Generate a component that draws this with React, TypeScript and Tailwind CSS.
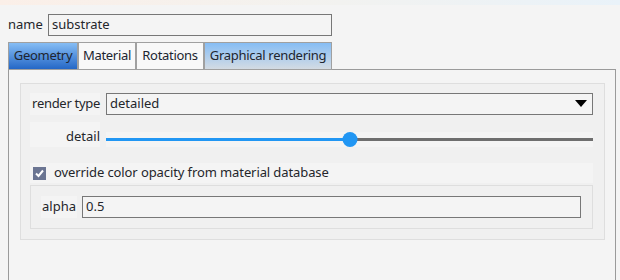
import { useState } from "react"

const font = { fontFamily: '"Noto Sans", "Open Sans", sans-serif' }

function Tab({ label, kind }: { label: string; kind: "active" | "hover" | "plain" }) {
  const cls =
    kind === "active"
      ? "bg-gradient-to-b from-[#86bdf4] to-[#2467c6]"
      : kind === "hover"
        ? "bg-gradient-to-b from-[#86bdf4] to-[#d3dbe3]"
        : "bg-[#f8f8f8]"
  return (
    <div
      className={`flex h-[28px] items-center justify-center whitespace-nowrap border border-[#a0a0a0] text-[13px] tracking-[-0.3px] text-[#202530] ${cls}`}
    >
      {label}
    </div>
  )
}

export default function App() {
  const [value] = useState(0.5)

  return (
    <div style={font} className="h-[280px] w-[620px] overflow-hidden bg-[#f4f4f4] text-[13px] text-[#24262b]">
      <div className="h-[5px] bg-gradient-to-r from-[#fbefe8] via-[#f3f2ef] to-[#e9f2f9]" />

      <div className="flex items-center pl-[8px] pt-[9px]">
        <span className="w-[40px]">name</span>
        <div className="flex h-[22px] w-[284px] items-center border border-[#777] bg-[#f4f4f4] px-[3px]">substrate</div>
      </div>

      <div className="ml-[8px] mt-[6px] flex">
        <div className="w-[70px]"><Tab label="Geometry" kind="active" /></div>
        <div className="w-[58px]"><Tab label="Material" kind="plain" /></div>
        <div className="w-[68px]"><Tab label="Rotations" kind="plain" /></div>
        <div className="w-[128px]"><Tab label="Graphical rendering" kind="hover" /></div>
      </div>

      <div className="ml-[8px] mr-[4px] -mt-px h-[300px] border border-[#9a9a9a] pl-[11px] pr-[10px] pt-[13px]">
        <div className="flex flex-col border border-[#dedede] bg-[#f0f0f0] pb-[10px] pl-[9px] pr-[11px] pt-[9px]">
          <div className="flex items-center gap-[6px]">
            <div className="flex h-[22px] w-[70px] items-center justify-end whitespace-nowrap bg-[#f4f4f4] tracking-[-0.3px]">
              render type
            </div>
            <div className="flex h-[22px] flex-1 items-center justify-between border border-[#777] bg-[#f4f4f4] px-[3px]">
              <span>detailed</span>
              <svg width="12" height="8" viewBox="0 0 12 8" className="mr-[2px]">
                <path d="M0 0 H12 L6 7 Z" fill="#000" />
              </svg>
            </div>
          </div>

          <div className="mt-[7px] flex items-end gap-[6px]">
            <div className="flex h-[25px] w-[70px] items-end justify-end bg-[#f4f4f4] pb-[1px]">detail</div>
            <div className="relative flex h-[15px] flex-1 items-center bg-[#f4f4f4]">
              <div className="h-[3px] w-full bg-[#6e6e6e]" />
              <div className="absolute left-0 h-[3px] bg-[#2196f3]" style={{ width: `${value * 100}%` }} />
              <div
                className="absolute h-[15px] w-[15px] -translate-x-1/2 rounded-full bg-[#2196f3]"
                style={{ left: `${value * 100}%` }}
              />
            </div>
          </div>

          <div className="mt-[16px] flex h-[20px] items-center bg-[#f4f4f4] pl-[3px]">
            <div className="flex h-[13px] w-[13px] items-center justify-center bg-[#6b7592]">
              <svg width="11" height="11" viewBox="0 0 11 11">
                <path d="M2 5.5 L4.5 8 L9 2.5" stroke="#fff" strokeWidth="2" fill="none" />
              </svg>
            </div>
            <span className="ml-[8px] tracking-[-0.1px]">override color opacity from material database</span>
          </div>

          <div className="mt-[2px] flex items-center border border-[#dedede] py-[10px] pl-[10px] pr-[11px]">
            <div className="flex h-[22px] w-[36px] items-center justify-center bg-[#f4f4f4]">alpha</div>
            <div className="ml-[5px] flex h-[22px] flex-1 items-center border border-[#777] bg-[#f4f4f4] px-[3px]">
              {value}
            </div>
          </div>
        </div>
      </div>
    </div>
  )
}
